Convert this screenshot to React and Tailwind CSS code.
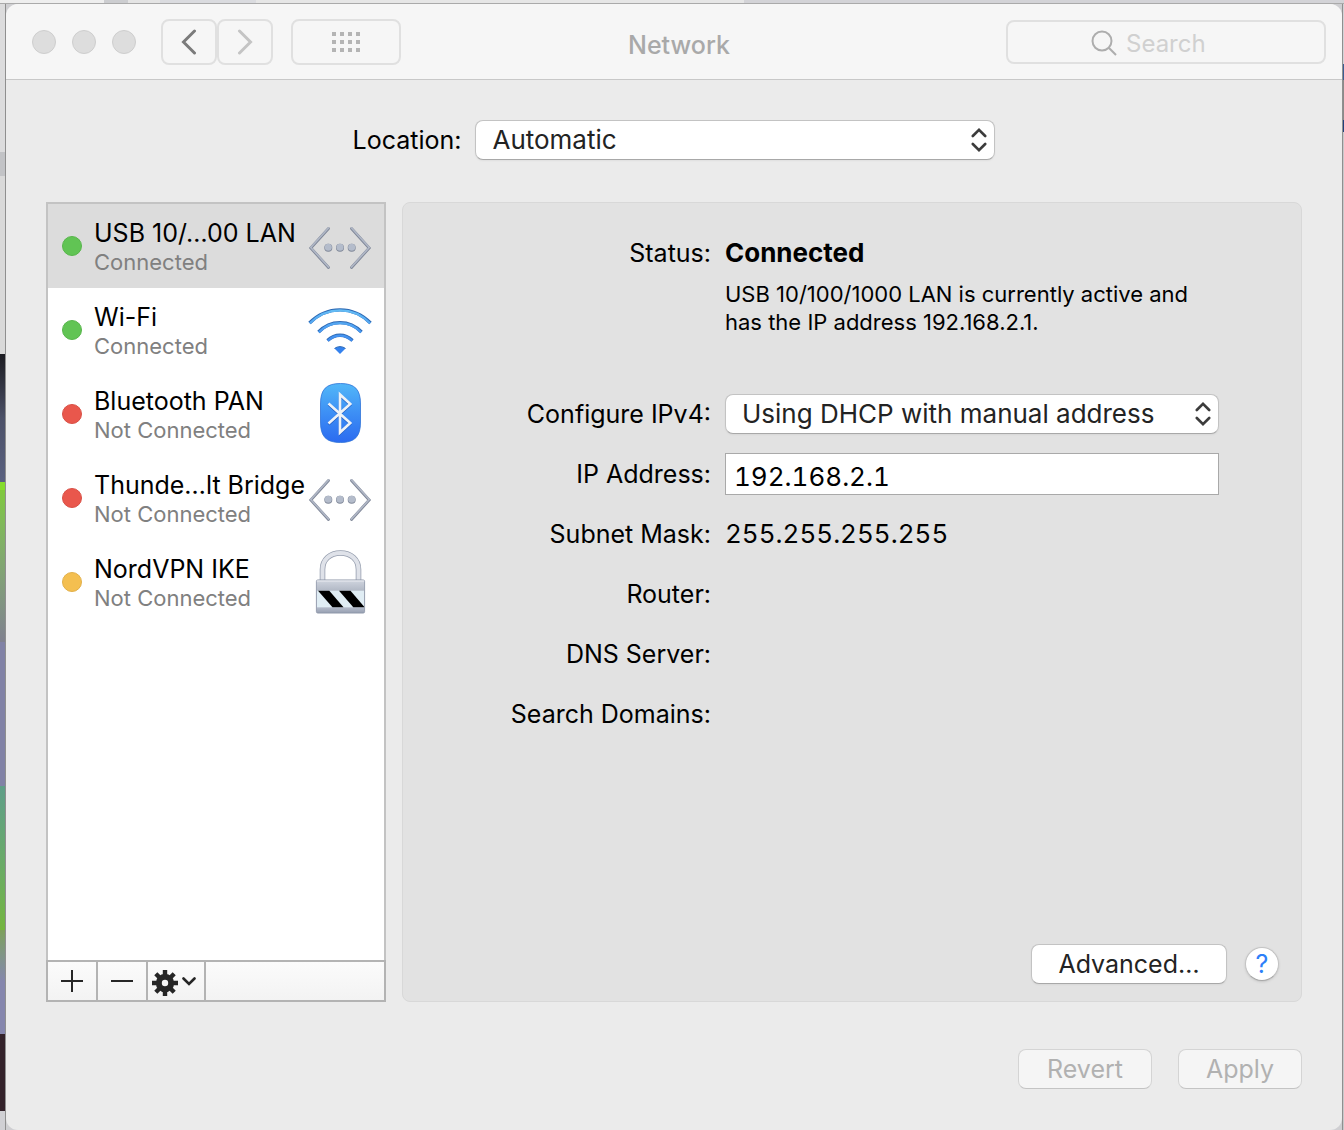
import React, { useState } from "react";

const services = [
  { id: "usb", name: "USB 10/…00 LAN", status: "Connected", dot: "green", icon: "ethernet" },
  { id: "wifi", name: "Wi-Fi", status: "Connected", dot: "green", icon: "wifi" },
  { id: "bluetooth", name: "Bluetooth PAN", status: "Not Connected", dot: "red", icon: "bluetooth" },
  { id: "thunderbolt", name: "Thunde…lt Bridge", status: "Not Connected", dot: "red", icon: "ethernet" },
  { id: "vpn", name: "NordVPN IKE", status: "Not Connected", dot: "yellow", icon: "lock" },
];

const dotColors = {
  green: "bg-[#61c454] border-[#58b64c]",
  red: "bg-[#e9574c] border-[#d95046]",
  yellow: "bg-[#f4bf50] border-[#e2b04a]",
};

function EthernetIcon() {
  return (
    <svg width="64" height="64" viewBox="0 0 64 64" fill="none">
      <g stroke="#7f8798" strokeWidth="2.8" strokeLinecap="round" strokeLinejoin="miter">
        <path d="M20.5 14.500 2.800 34 20.500 53.500" />
        <path d="M43.500 14.500 61.200 34 43.500 53.500" />
      </g>
      <g stroke="#b0b7c6" strokeWidth="1.700" strokeLinecap="round">
        <path d="M20.500 14 2.800 33.500 20.500 53" />
        <path d="M43.500 14 61.200 33.500 43.500 53" />
      </g>
      <g fill="#7f8798">
        <circle cx="20.300" cy="33.800" r="4" />
        <circle cx="32" cy="33.800" r="4" />
        <circle cx="43.700" cy="33.800" r="4" />
      </g>
      <g fill="#b4bccb">
        <circle cx="20.300" cy="33.300" r="3.500" />
        <circle cx="32" cy="33.300" r="3.500" />
        <circle cx="43.700" cy="33.300" r="3.500" />
      </g>
    </svg>
  );
}

function WifiIcon() {
  return (
    <svg width="64" height="64" viewBox="0 -1 64 64" fill="none">
      <defs>
        <linearGradient id="wifiFill" x1="0" y1="9" x2="0" y2="55" gradientUnits="userSpaceOnUse">
          <stop offset="0" stopColor="#66bff5" />
          <stop offset="1" stopColor="#2f78ee" />
        </linearGradient>
      </defs>
      <g stroke="#2c68b4" strokeWidth="3.400">
        <path d="M1.500 24C19 6.500 45 6.500 62.500 24" />
        <path d="M10.500 33C22.500 20.500 41.500 20.500 53.500 33" />
        <path d="M19.500 41.500C27 34.500 37 34.500 44.500 41.500" />
      </g>
      <g stroke="url(#wifiFill)" strokeWidth="2.200">
        <path d="M1.800 24.200C19 7 45 7 62.200 24.200" />
        <path d="M10.800 33.200C22.500 21 41.500 21 53.200 33.200" />
        <path d="M19.800 41.700C27 35 37 35 44.200 41.700" />
      </g>
      <path d="M26.500 49.500C30 47 34 47 37.500 49.500L32 55Z" fill="#3482ee" />
      <path d="M26.500 49.500C30 47 34 47 37.500 49.500" stroke="#2c68b4" />
    </svg>
  );
}

function BluetoothIcon() {
  return (
    <svg width="64" height="64" viewBox="0 0 64 64" fill="none">
      <defs>
        <linearGradient id="btFill" x1="0" y1="0" x2="0" y2="1">
          <stop offset="0" stopColor="#52b7f8" />
          <stop offset="0.5" stopColor="#3d8ff5" />
          <stop offset="1" stopColor="#2b6bf0" />
        </linearGradient>
      </defs>
      <path
        d="M32.500 1.500C47 1.500 52.500 7.500 52.500 22V40C52.500 54.500 47 60.500 32.500 60.500S12.500 54.500 12.500 40V22C12.500 7.500 18 1.500 32.500 1.500Z"
        fill="url(#btFill)"
        stroke="#2f73d8"
        strokeWidth="0.8"
      />
      <path d="M20.500 21.500 42.300 41 32 50.500V12.500L42.300 22 20.500 41.500" transform="translate(0 1)" stroke="#235fc4" strokeWidth="2.400" />
      <path d="M20.500 21.500 42.300 41 32 50.500V12.500L42.300 22 20.500 41.500" stroke="#eef2f7" strokeWidth="2.600" />
    </svg>
  );
}

function LockIcon() {
  return (
    <svg width="64" height="64" viewBox="0 0 64 64" fill="none">
      <defs>
        <linearGradient id="lockBody" x1="0" y1="30" x2="0" y2="64" gradientUnits="userSpaceOnUse">
          <stop offset="0" stopColor="#d0d5df" />
          <stop offset="0.35" stopColor="#aeb5c2" />
          <stop offset="0.8" stopColor="#b5bccb" />
          <stop offset="1" stopColor="#929bad" />
        </linearGradient>
      </defs>
      <path d="M14.500 33V19.500C14.500 9.500 22 3 32.500 3S50.500 9.500 50.500 19.500V33" stroke="#969eae" strokeWidth="5.600" />
      <path d="M14.500 33V19.500C14.500 9.500 22 3 32.500 3S50.500 9.500 50.500 19.500V33" stroke="#dfe2e9" strokeWidth="4" />
      <rect x="8.400" y="29.900" width="48.200" height="33.200" rx="1.500" fill="url(#lockBody)" stroke="#8992a5" strokeWidth="0.8" />
      <path d="M9 31H56" stroke="#e9ecf1" />
      <rect x="9" y="40.700" width="47" height="16.600" fill="#e0edf4" />
      <g fill="#000">
        <path d="M10 40.700H21.300L35.500 57.300H24.500Z" />
        <path d="M31 40.700H42.500L56 56.500V57.300H45.300Z" />
      </g>
    </svg>
  );
}

const icons = {
  ethernet: EthernetIcon,
  wifi: WifiIcon,
  bluetooth: BluetoothIcon,
  lock: LockIcon,
};

function UpDownArrows() {
  return (
    <svg
      className="pointer-events-none absolute top-1/2 right-2 -translate-y-1/2"
      width="16"
      height="26"
      viewBox="0 0 16 26"
      fill="none"
      stroke="#3c3c3c"
      strokeWidth="2.600"
      strokeLinecap="round"
      strokeLinejoin="miter"
    >
      <path d="M1.800 9 8 2.800 14.200 9" />
      <path d="M1.800 17 8 23.200 14.200 17" />
    </svg>
  );
}

function PopUp({ id, options, className }) {
  return (
    <div className={`relative ${className}`}>
      <select
        id={id}
        className="h-10 w-full appearance-none rounded-lg border border-[#c3c3c3] border-b-[#a8a8a8] bg-white pr-10 pl-4 text-[26px] leading-8 text-[#232323] shadow-xs outline-none"
      >
        {options.map((option) => (
          <option key={option}>{option}</option>
        ))}
      </select>
      <UpDownArrows />
    </div>
  );
}

function Toolbar() {
  return (
    <header className="grid h-19 grid-cols-[1fr_auto_1fr] items-center rounded-t-xl border-b border-[#c8c8c8] bg-[#f6f6f6] pr-4 pl-[26px]">
      <div className="flex items-center">
        <div className="flex gap-4">
          <button aria-label="Close" className="size-6 rounded-full border border-[#cecece] bg-[#dddddd]" />
          <button aria-label="Minimize" className="size-6 rounded-full border border-[#cecece] bg-[#dddddd]" />
          <button aria-label="Zoom" className="size-6 rounded-full border border-[#cecece] bg-[#dddddd]" />
        </div>
        <div className="ml-[25px] flex">
          <button
            aria-label="Back"
            className="flex h-[46px] w-14 items-center justify-center rounded-lg border-2 border-[#e0e0e0]"
          >
            <svg width="16" height="26" viewBox="0 0 16 26" fill="none" stroke="#7b7b7b" strokeWidth="3" strokeLinecap="round">
              <path d="M13.500 2 2.500 13 13.500 24" />
            </svg>
          </button>
          <button
            aria-label="Forward"
            disabled
            className="flex h-[46px] w-14 items-center justify-center rounded-lg border-2 border-[#e0e0e0]"
          >
            <svg width="16" height="26" viewBox="0 0 16 26" fill="none" stroke="#c4c4c4" strokeWidth="3" strokeLinecap="round">
              <path d="M2.500 2 13.500 13 2.500 24" />
            </svg>
          </button>
        </div>
        <button
          aria-label="Show All"
          className="ml-[18px] flex h-[46px] w-[110px] items-center justify-center rounded-lg border-2 border-[#e0e0e0]"
        >
          <svg width="28" height="20" viewBox="0 0 28 20" fill="#b4b4b4">
            {[0, 8, 16].map((y) =>
              [0, 8, 16, 24].map((x) => <rect key={`${x}-${y}`} x={x} y={y} width="4" height="4" />)
            )}
          </svg>
        </button>
      </div>

      <h1 className="pt-1.5 text-[25px] leading-8 font-medium text-[#a9a9a9]">Network</h1>

      <label className="flex h-11 w-80 items-center justify-center gap-2 justify-self-end rounded-lg border-2 border-[#e0e0e0]">
        <svg width="28" height="28" viewBox="0 0 28 28" fill="none" stroke="#adadad" strokeWidth="2">
          <circle cx="12" cy="13" r="9.500" />
          <path d="M18.800 19.800 26 27" />
        </svg>
        <input
          type="text"
          aria-label="Search"
          placeholder="Search"
          className="w-29 bg-transparent pt-1 text-[24px] leading-8 outline-none placeholder:text-[#d0d0d0]"
        />
      </label>
    </header>
  );
}

function ServiceList({ selected, onSelect }) {
  return (
    <aside className="flex w-[340px] shrink-0 flex-col">
      <ul className="flex-1 border-2 border-b-0 border-[#c3c3c3] bg-white">
        {services.map((service) => {
          const Icon = icons[service.icon];
          return (
            <li key={service.id}>
              <button
                onClick={() => onSelect(service.id)}
                className={`flex h-21 w-full items-center pr-3 pl-3.5 text-left ${
                  selected === service.id ? "bg-[#dcdcdc]" : "bg-white"
                }`}
              >
                <span className={`size-5 shrink-0 rounded-full border ${dotColors[service.dot]}`} />
                <span className="ml-3 min-w-0 flex-1 pt-0.5 whitespace-nowrap">
                  <span className="block text-[25px] leading-[30px] text-black">{service.name}</span>
                  <span className="block text-[22px] leading-7 text-[#808080]">{service.status}</span>
                </span>
                <span className="shrink-0">
                  <Icon />
                </span>
              </button>
            </li>
          );
        })}
      </ul>
      <div className="flex h-[42px] border-2 border-[#b3b3b3] bg-linear-to-b from-[#fbfbfb] to-[#f3f3f3]">
        <button aria-label="Add service" className="flex w-[50px] items-center justify-center border-r-2 border-[#b3b3b3]">
          <svg width="22" height="22" viewBox="0 0 22 22" stroke="#262626" strokeWidth="2">
            <path d="M0 11H22M11 0V22" />
          </svg>
        </button>
        <button aria-label="Remove service" className="flex w-[50px] items-center justify-center border-r-2 border-[#b3b3b3]">
          <svg width="22" height="22" viewBox="0 0 22 22" stroke="#262626" strokeWidth="2">
            <path d="M0 11H22" />
          </svg>
        </button>
        <button
          aria-label="Service actions"
          className="flex w-[58px] items-center justify-center gap-1 border-r-2 border-[#b3b3b3] pt-1 pr-1"
        >
          <svg width="26" height="26" viewBox="0 0 26 26" fill="none" stroke="#262626">
            <circle cx="13" cy="13" r="6.200" strokeWidth="6" />
            <path
              d="M13 0V5M13 21V26M0 13H5M21 13H26M3.800 3.800 7.300 7.300M18.700 18.700 22.200 22.200M3.800 22.200 7.300 18.700M18.700 7.300 22.200 3.800"
              strokeWidth="4.400"
            />
          </svg>
          <svg width="14" height="12" viewBox="0 0 14 12" fill="none" stroke="#262626" strokeWidth="2.600" strokeLinecap="round">
            <path d="M1.500 1.500 7 7 12.500 1.500" />
          </svg>
        </button>
      </div>
    </aside>
  );
}

function Row({ label, htmlFor, children }) {
  return (
    <div className="grid h-15 grid-cols-[308px_494px] items-center gap-x-3.5 text-[25px] leading-8">
      {htmlFor ? (
        <label htmlFor={htmlFor} className="text-right">
          {label}
        </label>
      ) : (
        <span className="text-right">{label}</span>
      )}
      {children}
    </div>
  );
}

function Details() {
  const [address, setAddress] = useState("192.168.2.1");

  return (
    <section className="flex min-w-0 flex-1 flex-col rounded-lg border border-[#d8d8d8] bg-[#e2e2e2] pt-[34px] pr-[22px] pb-[17px]">
      <div className="grid grid-cols-[308px_494px] gap-x-3.5 text-[25px] leading-8">
        <span className="text-right">Status:</span>
        <div>
          <strong className="text-[26px] font-bold">Connected</strong>
          <p className="mt-[11px] text-[22px] leading-7">
            USB 10/100/1000 LAN is currently active and
            <br />
            has the IP address 192.168.2.1.
          </p>
        </div>
      </div>

      <div className="mt-12">
        <Row label="Configure IPv4:" htmlFor="ipv4">
          <PopUp
            id="ipv4"
            className="w-full"
            options={["Using DHCP with manual address", "Using DHCP", "Manually", "Off"]}
          />
        </Row>
        <Row label="IP Address:" htmlFor="address">
          <input
            id="address"
            type="text"
            value={address}
            onChange={(event) => setAddress(event.target.value)}
            className="h-[42px] w-full border border-[#a9a9a9] bg-white px-2 pt-1 text-[26px] tabular-nums outline-none"
          />
        </Row>
        <Row label="Subnet Mask:">
          <span className="text-[26px] tabular-nums">255.255.255.255</span>
        </Row>
        <Row label="Router:" />
        <Row label="DNS Server:" />
        <Row label="Search Domains:" />
      </div>

      <div className="mt-auto flex items-center justify-end gap-[18px]">
        <button className="h-10 w-49 rounded-lg border border-[#c3c3c3] border-b-[#a8a8a8] bg-white text-[25px] leading-8 text-[#232323] shadow-xs">
          Advanced…
        </button>
        <button
          aria-label="Help"
          className="size-[34px] rounded-full border border-[#c3c3c3] border-b-[#a8a8a8] bg-white text-[25px] leading-8 text-[#2d7ff9] shadow-sm"
        >
          ?
        </button>
      </div>
    </section>
  );
}

function App() {
  const [selected, setSelected] = useState("usb");

  return (
    <div className="flex min-h-screen flex-col bg-[#cfcfd2] font-['Inter','Liberation_Sans',sans-serif] text-black">
      <div className="flex h-1 border-b border-[#aaaaaa]">
        <div className="w-26 bg-[#eeeeee]" />
        <div className="w-6 bg-[#cccdd0]" />
        <div className="w-8 bg-[#e4e4e4]" />
        <div className="w-24 bg-[#dadbdf]" />
        <div className="flex-1 bg-[#e6e6e6]" />
        <div className="w-150 bg-[#d3d3d7]" />
      </div>

      <div className="flex flex-1">
        {/* desktop visible left of the window */}
        <div className="flex w-1.5 flex-col border-r border-[#8f8f8f]">
          <div className="h-37 bg-[#dcdcdd]" />
          <div className="h-6 bg-[#c2c3c6]" />
          <div className="h-[178px] bg-[#d9d9d9]" />
          <div className="h-32 bg-linear-to-b from-[#1c1c22] via-[#4c5168] to-[#5a6180]" />
          <div className="h-2 bg-[#86dc2c]" />
          <div className="h-38 bg-linear-to-b from-[#7fc83c] to-[#80818f]" />
          <div className="h-36 bg-[#8182a6]" />
          <div className="h-36 bg-linear-to-b from-[#5f9e88] to-[#74b53d]" />
          <div className="h-26 bg-linear-to-b from-[#7da05a] via-[#8586ad] to-[#8586ad]" />
          <div className="h-[77px] bg-[#33222a]" />
          <div className="flex-1 bg-[#d0d0d4]" />
        </div>

        <main className="flex min-w-0 flex-1 flex-col rounded-xl bg-[#ebebeb]">
          <Toolbar />

          <div className="flex flex-1 flex-col px-10 pt-10 pb-[41px]">
            <div className="flex items-center justify-center gap-3.5">
              <label htmlFor="location" className="text-[25px] leading-8">
                Location:
              </label>
              <PopUp id="location" className="w-130" options={["Automatic", "Edit Locations…"]} />
            </div>

            <div className="mt-[42px] flex flex-1 gap-4">
              <ServiceList selected={selected} onSelect={setSelected} />
              <Details />
            </div>

            <div className="mt-[47px] flex justify-end gap-[26px]">
              <button
                disabled
                className="h-10 w-[134px] rounded-lg border border-[#d4d4d4] border-b-[#c4c4c4] bg-[#f5f5f5] text-[25px] leading-8 text-[#b1b1b1]"
              >
                Revert
              </button>
              <button
                disabled
                className="h-10 w-[124px] rounded-lg border border-[#d4d4d4] border-b-[#c4c4c4] bg-[#f5f5f5] text-[25px] leading-8 text-[#b1b1b1]"
              >
                Apply
              </button>
            </div>
          </div>
        </main>

        {/* desktop visible right of the window */}
        <div className="flex w-0.5 flex-col border-l border-[#8f8f8f]">
          <div className="h-15 bg-[#d3d3d7]" />
          <div className="h-4 bg-[#3c5d93]" />
          <div className="h-10 bg-[#8a8a8a]" />
          <div className="h-3 bg-[#22407c]" />
          <div className="flex-1 bg-[#c8c8ca]" />
        </div>
      </div>
    </div>
  );
}

export default App;
